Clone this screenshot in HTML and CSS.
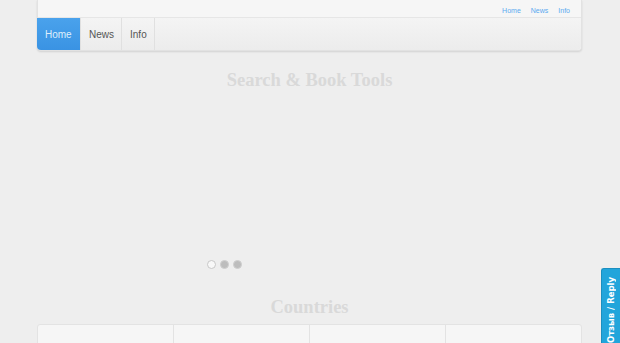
FILE: index.html
```html
<!DOCTYPE html>
<html>
<head>
<meta charset="utf-8">
<link rel="stylesheet" href="styles.css">
</head>
<body>
<div class="wrap">
  <header class="header">
    <div class="topbar">
      <a href="#">Home</a>
      <a href="#">News</a>
      <a href="#">Info</a>
    </div>
    <nav class="nav">
      <a class="active" href="#">Home</a>
      <a href="#">News</a>
      <a href="#">Info</a>
    </nav>
  </header>
  <h2 class="title">Search &amp; Book Tools</h2>
  <div class="slider"></div>
  <div class="dots">
    <span class="dot on"></span>
    <span class="dot"></span>
    <span class="dot"></span>
  </div>
  <h2 class="title countries">Countries</h2>
  <div class="cards">
    <div class="card"></div>
    <div class="card"></div>
    <div class="card"></div>
    <div class="card"></div>
  </div>
</div>
<div class="feedback"><span>Отзыв / Reply</span></div>
</body>
</html>
```
FILE: styles.css
```css
html, body { margin: 0; padding: 0; }
body {
  background: #eeeeee;
  font-family: "Liberation Sans", "DejaVu Sans", sans-serif;
  height: 343px;
  overflow: hidden;
}
.wrap {
  width: 545px;
  margin-left: 37px;
}
.header {
  background: #f6f6f6;
  border-radius: 0 0 4px 4px;
  box-shadow: 0 1px 2px rgba(0,0,0,0.12);
  border: 1px solid #e2e2e2;
  border-top: none;
  box-sizing: border-box;
}
.topbar {
  height: 18px;
  display: flex;
  justify-content: flex-end;
  align-items: flex-end;
  gap: 10px;
  padding-right: 11px;
  border-bottom: 1px solid #e6e6e6;
  box-sizing: border-box;
  padding-bottom: 1px;
}
.topbar a {
  color: #5aaaf0;
  font-size: 7px;
  text-decoration: none;
  line-height: 10px;
}
.nav {
  display: flex;
  height: 32px;
  background: linear-gradient(#f4f4f4, #ececec);
  border-radius: 0 0 4px 4px;
}
.nav a {
  display: flex;
  align-items: center;
  padding: 0 7px 0 8px;
  font-size: 10px;
  color: #555;
  text-decoration: none;
  border-right: 1px solid #e0e0e0;
}
.nav a.active {
  background: linear-gradient(#4aa2ec, #3a93e3);
  color: #dfeefc;
  border-radius: 0 0 0 4px;
  width: 27px;
  padding: 0 8px;
  margin-left: -1px;
}
.title {
  margin: 0;
  text-align: center;
  font-family: "Liberation Serif", "DejaVu Serif", serif;
  font-weight: bold;
  font-size: 18.5px;
  color: #d9d9d9;
  line-height: 22px;
  padding-top: 18px;
}
.slider { height: 169px; }
.dots {
  display: flex;
  gap: 4px;
  padding-left: 170px;
}
.dot {
  width: 9px;
  height: 9px;
  border-radius: 50%;
  background: #bdbdbd;
  box-sizing: border-box;
  border: 1px solid #cfcfcf;
}
.dot.on {
  background: #f8f8f8;
  border-color: #c8c8c8;
}
.countries { padding-top: 27px; }
.cards {
  display: flex;
  margin-top: 6px;
  height: 30px;
  background: #f6f6f6;
  border: 1px solid #e3e3e3;
  border-radius: 3px 3px 0 0;
}
.card {
  flex: 1;
  border-right: 1px solid #e3e3e3;
}
.card:last-child { border-right: none; }
.feedback {
  position: fixed;
  right: 0;
  top: 268px;
  width: 18px;
  height: 80px;
  background: #22a5db;
  border-radius: 3px 0 0 0;
  border: 1px solid #1b8fc0;
  border-right: none;
  display: flex;
  align-items: flex-end;
  justify-content: center;
}
.feedback span {
  writing-mode: vertical-rl;
  transform: rotate(180deg);
  color: #fff;
  font-family: "DejaVu Sans", sans-serif;
  font-weight: bold;
  font-size: 8.5px;
  white-space: nowrap;
  margin-bottom: 6px;
}
```
